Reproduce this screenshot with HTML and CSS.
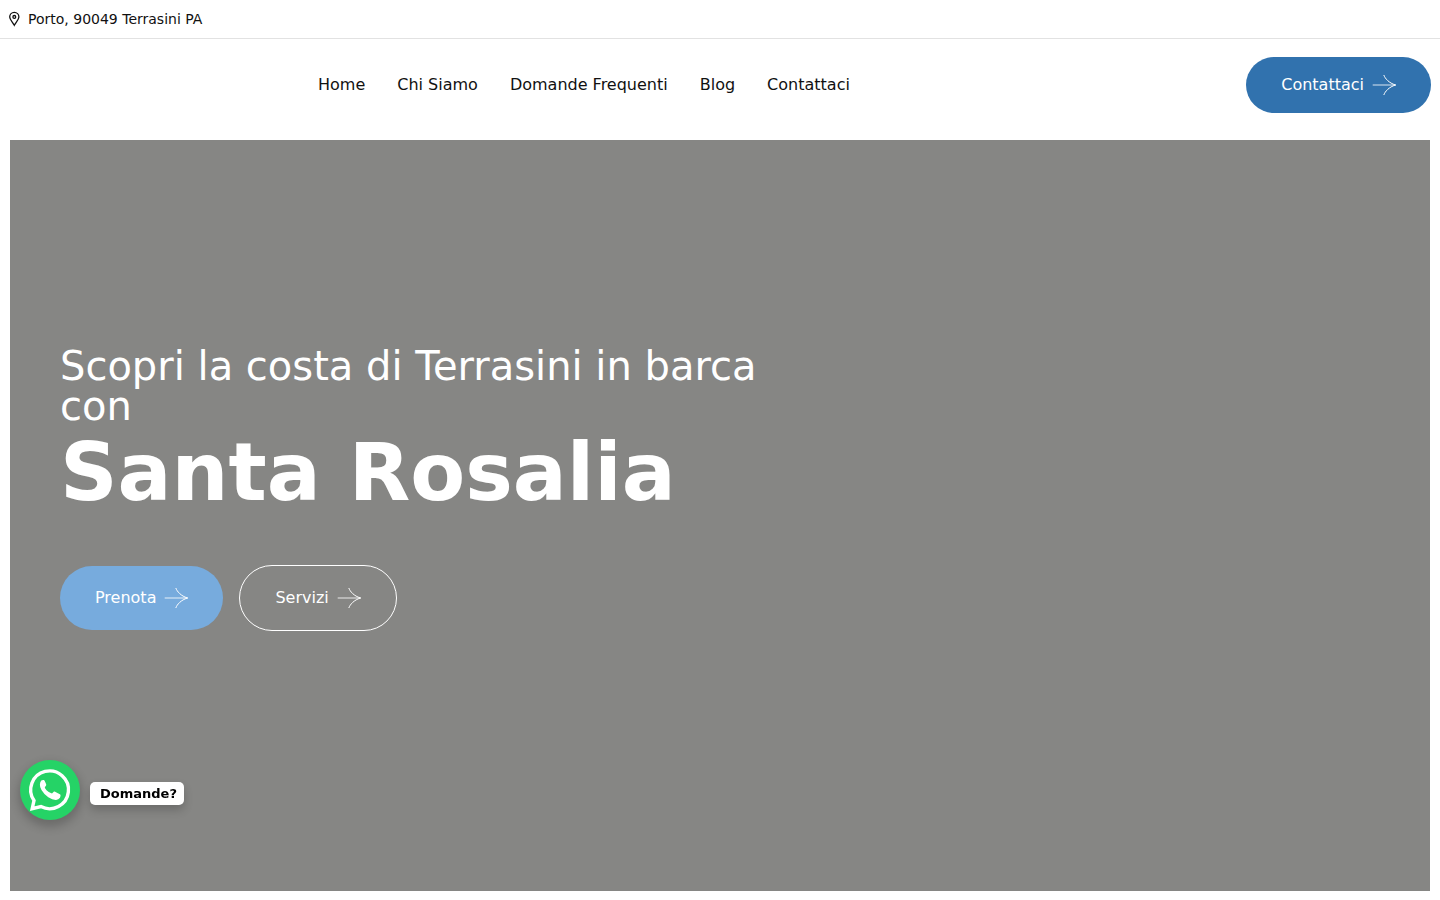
FILE: index.html
```html
<!DOCTYPE html>
<html lang="it">
<head>
<meta charset="utf-8">
<meta name="viewport" content="width=device-width, initial-scale=1">
<title>Santa Rosalia</title>
<link rel="stylesheet" href="styles.css">
</head>
<body>
<svg class="symbols" aria-hidden="true">
  <symbol id="arrow" viewBox="0 0 24 24">
    <path d="M.7 12H24" stroke-width="1.200" opacity=".7"/>
    <path d="M11.800 2C13 5.500 17 10 23.500 12C17 14 13 18.500 11.800 22" stroke-width="1"/>
  </symbol>
</svg>
<div class="topbar">
  <svg class="pin" viewBox="0 0 12 16" aria-hidden="true">
    <path d="M6.300 14.300C4.800 11.500 1.700 8.800 1.700 6a4.600 4.600 0 0 1 9.200 0C10.900 8.800 7.800 11.500 6.300 14.300Z"/>
    <circle cx="6.300" cy="5.900" r="1.400"/>
  </svg>
  <span>Porto, 90049 Terrasini PA</span>
</div>
<header class="header">
  <nav class="nav">
    <a href="#">Home</a>
    <a href="#">Chi Siamo</a>
    <a href="#">Domande Frequenti</a>
    <a href="#">Blog</a>
    <a href="#">Contattaci</a>
  </nav>
  <a class="button button-contact" href="#">Contattaci <svg class="arrow" aria-hidden="true"><use href="#arrow"/></svg></a>
</header>
<main class="hero">
  <div class="hero-content">
    <p class="hero-lead">Scopri la costa di Terrasini in barca con</p>
    <h1 class="hero-title">Santa Rosalia</h1>
    <div class="hero-actions">
      <a class="button button-book" href="#">Prenota <svg class="arrow" aria-hidden="true"><use href="#arrow"/></svg></a>
      <a class="button button-services" href="#">Servizi <svg class="arrow" aria-hidden="true"><use href="#arrow"/></svg></a>
    </div>
  </div>
</main>
<a class="chat" href="#">
  <svg class="chat-icon" viewBox="0 0 60 60" aria-hidden="true">
    <path class="bubble" d="M14 40.500A18.900 18.900 0 1 1 20.900 46.600L12.200 48.700Z"/>
    <path class="phone" d="M21.300 20.500Q22.500 19.700 24 20.100Q24.600 20.400 26.300 24.700Q26.400 25.600 24.800 27.200Q24.500 27.900 26.500 30.200Q29 32.700 32 33.500L34 31.600Q34.700 31.300 36 32.200L40.300 34.500Q41 35.200 40 37.700Q38.500 39.600 36 39.900Q32.500 40 28.300 37.300Q24 34.300 21.500 30Q19.800 27.500 19.900 24.500Q20 21.800 21.300 20.500Z"/>
  </svg>
  <span class="chat-label">Domande?</span>
</a>
</body>
</html>
```
FILE: styles.css
```css
* {
  box-sizing: border-box;
}

body {
  margin: 0;
  min-height: 100vh;
  display: flex;
  flex-direction: column;
  background: #fff;
  color: #111;
  font: 16px/24px "DejaVu Sans", sans-serif;
}

a {
  color: inherit;
  text-decoration: none;
}

.symbols {
  position: absolute;
  width: 0;
  height: 0;
}

.topbar {
  display: flex;
  align-items: center;
  gap: 8px;
  padding: 8px;
  border-bottom: 1px solid #e2e2e2;
  font-size: 14px;
  line-height: 22px;
}

.pin {
  width: 12px;
  height: 16px;
  fill: none;
  stroke: #111;
  stroke-width: 1.3;
}

.header {
  display: flex;
  align-items: center;
  justify-content: space-between;
  padding: 18px 9px 27px 318px;
}

.nav {
  display: flex;
  gap: 32px;
}

.button {
  display: inline-flex;
  align-items: center;
  gap: 8px;
  padding: 20px 35px;
  border-radius: 32px;
  color: #fff;
}

.arrow {
  width: 24px;
  height: 24px;
  fill: none;
  stroke: #fff;
}

.button-contact {
  padding: 16px 35px;
  background: #3172ae;
}

.button-book {
  background: #77abdd;
}

.button-services {
  border: 1px solid #fff;
  border-radius: 33px;
}

.hero {
  flex: 1;
  display: flex;
  align-items: center;
  margin: 0 10px 9px;
  padding: 0 50px 54px;
  background: #868684;
  color: #fff;
}

.hero-content {
  width: 710px;
  max-width: 100%;
}

.hero-lead {
  margin: 0;
  font-size: 40px;
  line-height: 40px;
}

.hero-title {
  margin: 7px 0 52px;
  font-size: 80px;
  line-height: 80px;
}

.hero-actions {
  display: flex;
  align-items: center;
  gap: 16px;
}

.chat {
  position: fixed;
  left: 20px;
  bottom: 80px;
  display: flex;
  align-items: center;
  gap: 10px;
}

.chat-icon {
  width: 60px;
  height: 60px;
  border-radius: 50%;
  background: #25d366;
  box-shadow: 0 5px 10px 2px rgba(0, 0, 0, 0.2);
}

.bubble {
  fill: none;
  stroke: #fff;
  stroke-width: 3.4;
}

.phone {
  fill: #fff;
}

.chat-label {
  margin-top: 7px;
  padding: 0 7px 0 10px;
  border-radius: 5px;
  background: #fff;
  box-shadow: 0 5px 10px rgba(0, 0, 0, 0.2);
  color: #000;
  font-size: 13px;
  font-weight: 700;
  line-height: 23px;
}
```
